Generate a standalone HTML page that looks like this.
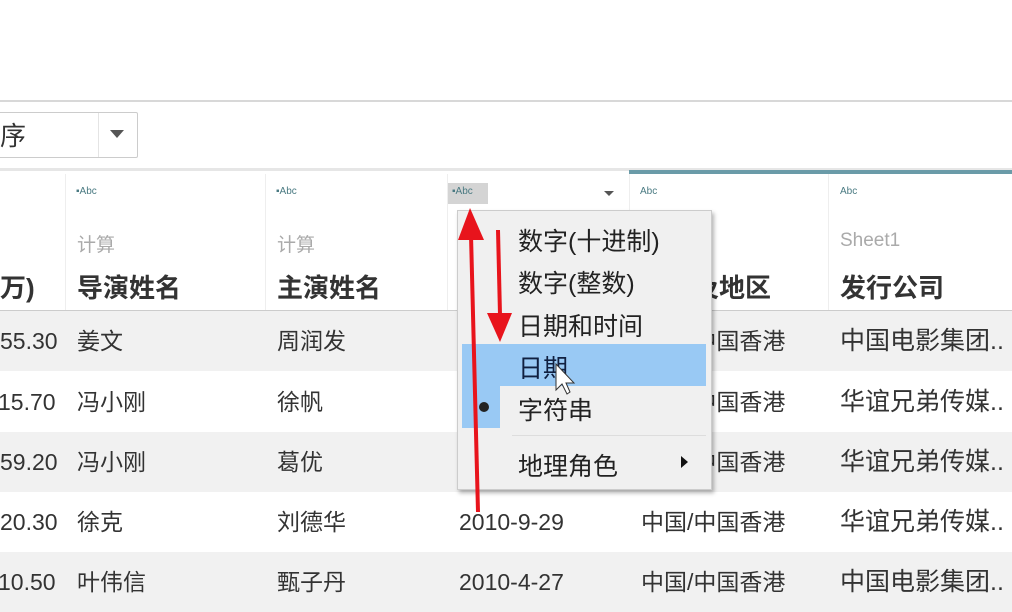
<!DOCTYPE html>
<html><head><meta charset="utf-8"><style>
*{margin:0;padding:0;box-sizing:border-box}
body{width:1012px;height:598px;overflow:hidden;background:#fff;position:relative;font-family:"Liberation Sans","Noto Sans CJK SC",sans-serif;color:#333}
.a{position:absolute;white-space:nowrap}
.abc{font-size:10px;color:#4a7a82;top:186px}
.calc{font-size:19px;color:#aaa;top:230px}
.hd{font-size:26px;font-weight:bold;color:#333;top:268px}
.row{position:absolute;left:0;width:1012px;height:60px;overflow:hidden}
.c{position:absolute;font-size:23px;line-height:60px;color:#333}
.w{font-size:25px}
.mi{position:absolute;left:518px;font-size:25px;color:#222}
</style></head><body>
<div class="a" style="left:0;top:100px;width:1012px;height:2px;background:#d8d8d8"></div>
<div class="a" style="left:-5px;top:112px;width:143px;height:46px;border:1px solid #ccc;border-radius:2px;background:#fff"></div>
<div class="a" style="left:98px;top:113px;width:1px;height:44px;background:#e4e4e4"></div>
<div class="a" style="left:0;top:116px;font-size:26px;color:#333">序</div>
<div class="a" style="left:110px;top:130px;width:0;height:0;border-left:7px solid transparent;border-right:7px solid transparent;border-top:8px solid #555"></div>
<div class="a" style="left:0;top:168px;width:1012px;height:3px;background:#e6e6e6"></div>
<div class="a" style="left:629px;top:170px;width:383px;height:4px;background:#6a9ba8"></div>
<div class="a" style="left:65px;top:174px;width:1px;height:136px;background:#eee"></div>
<div class="a" style="left:265px;top:174px;width:1px;height:136px;background:#eee"></div>
<div class="a" style="left:447px;top:174px;width:1px;height:136px;background:#eee"></div>
<div class="a" style="left:629px;top:174px;width:1px;height:136px;background:#eee"></div>
<div class="a" style="left:828px;top:174px;width:1px;height:136px;background:#eee"></div>
<div class="a abc" style="left:76px">▪Abc</div>
<div class="a abc" style="left:276px">▪Abc</div>
<div class="a" style="left:448px;top:183px;width:40px;height:21px;background:#d4d4d4"></div>
<div class="a abc" style="left:452px">▪Abc</div>
<div class="a" style="left:604px;top:191px;border-left:5px solid transparent;border-right:5px solid transparent;border-top:5px solid #555"></div>
<div class="a abc" style="left:640px">Abc</div>
<div class="a abc" style="left:840px">Abc</div>
<div class="a calc" style="left:77px">计算</div>
<div class="a calc" style="left:277px">计算</div>
<div class="a calc" style="left:840px">Sheet1</div>
<div class="a hd" style="left:0">万)</div>
<div class="a hd" style="left:77px">导演姓名</div>
<div class="a hd" style="left:277px">主演姓名</div>
<div class="a hd" style="left:459px">上映日期</div>
<div class="a hd" style="left:641px">国家及地区</div>
<div class="a hd" style="left:840px">发行公司</div>
<div class="a" style="left:0;top:310px;width:1012px;height:1px;background:#ccc"></div>
<div class="row" style="top:311px;background:#f1f1f1">
<span class="c" style="left:0">55.30</span><span class="c" style="left:77px">姜文</span><span class="c" style="left:277px">周润发</span><span class="c" style="left:459px">2010-12-16</span><span class="c" style="left:641px">中国/中国香港</span><span class="c w" style="left:840px">中国电影集团..</span></div>
<div class="row" style="top:372px;background:#fff">
<span class="c" style="left:-2px">15.70</span><span class="c" style="left:77px">冯小刚</span><span class="c" style="left:277px">徐帆</span><span class="c" style="left:641px">中国/中国香港</span><span class="c w" style="left:840px">华谊兄弟传媒..</span></div>
<div class="row" style="top:432px;background:#f1f1f1">
<span class="c" style="left:0">59.20</span><span class="c" style="left:77px">冯小刚</span><span class="c" style="left:277px">葛优</span><span class="c" style="left:641px">中国/中国香港</span><span class="c w" style="left:840px">华谊兄弟传媒..</span></div>
<div class="row" style="top:492px;background:#fff">
<span class="c" style="left:0">20.30</span><span class="c" style="left:77px">徐克</span><span class="c" style="left:277px">刘德华</span><span class="c" style="left:459px">2010-9-29</span><span class="c" style="left:641px">中国/中国香港</span><span class="c w" style="left:840px">华谊兄弟传媒..</span></div>
<div class="row" style="top:552px;background:#f1f1f1">
<span class="c" style="left:-2px">10.50</span><span class="c" style="left:77px">叶伟信</span><span class="c" style="left:277px">甄子丹</span><span class="c" style="left:459px">2010-4-27</span><span class="c" style="left:641px">中国/中国香港</span><span class="c w" style="left:840px">中国电影集团..</span></div>
<!-- menu -->
<div class="a" style="left:457px;top:210px;width:255px;height:280px;background:#f0f0f0;border:1px solid #ccc;box-shadow:2px 3px 4px rgba(0,0,0,.3)"></div>
<div class="a" style="left:462px;top:344px;width:244px;height:42px;background:#99c9f4"></div>
<div class="a" style="left:462px;top:386px;width:38px;height:42px;background:#99c9f4"></div>
<div class="a" style="left:479px;top:402px;width:10px;height:10px;border-radius:50%;background:#222"></div>
<div class="a" style="left:512px;top:435px;width:194px;height:1px;background:#ddd"></div>
<div class="a mi" style="top:222px">数字(十进制)</div>
<div class="a mi" style="top:264px">数字(整数)</div>
<div class="a mi" style="top:307px">日期和时间</div>
<div class="a mi" style="top:349px;color:#102040">日期</div>
<div class="a mi" style="top:391px">字符串</div>
<div class="a mi" style="top:447px">地理角色</div>
<div class="a" style="left:681px;top:456px;border-top:6px solid transparent;border-bottom:6px solid transparent;border-left:7px solid #111"></div>
<svg class="a" style="left:0;top:0" width="1012" height="598">
<path d="M556 364 L556 390 L562 384 L567 394 L570 392 L566 383 L574 383 Z" fill="#fff" stroke="#333" stroke-width="1"/>
<line x1="478" y1="512" x2="471" y2="235" stroke="#e8141c" stroke-width="4"/>
<polygon points="458,240 470,208 484,240" fill="#e8141c"/>
<line x1="498" y1="230" x2="500" y2="315" stroke="#e8141c" stroke-width="4"/>
<polygon points="487,313 512,313 500,342" fill="#e8141c"/>
</svg>
</body></html>
